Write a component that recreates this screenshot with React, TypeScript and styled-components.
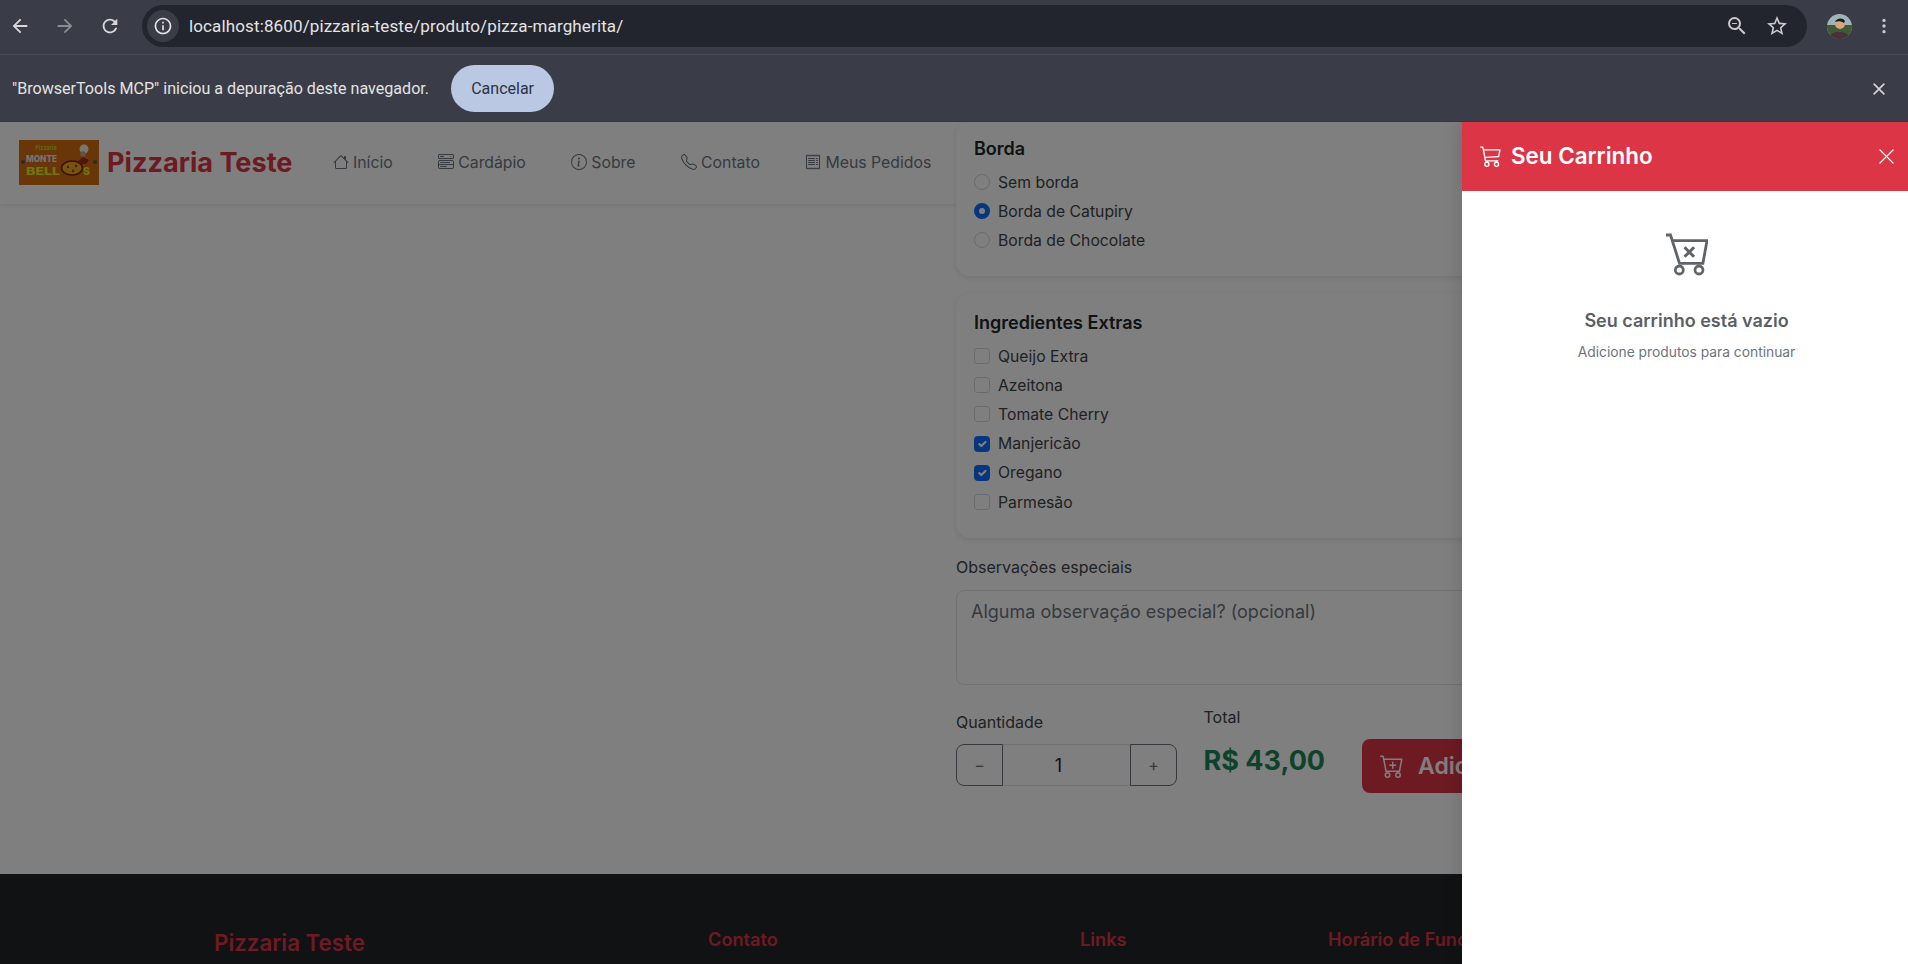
import React from "react";
import styled, { createGlobalStyle } from "styled-components";
import {
  BsCart3,
  BsCartPlus,
  BsHouse,
  BsInfoCircle,
  BsMenuButtonWide,
  BsReceipt,
  BsTelephone,
  BsThreeDotsVertical,
  BsX,
  BsXLg
} from "react-icons/bs";
import {
  MdArrowBack,
  MdArrowForward,
  MdOutlineInfo,
  MdRefresh,
  MdStarBorder,
  MdZoomOut
} from "react-icons/md";

const GlobalStyle = createGlobalStyle`
  html, body {
    margin: 0;
    height: 100%;
    overflow: hidden;
    background: #fff;
  }
  #root {
    height: 100%;
  }
  * {
    box-sizing: border-box;
  }
`;

const Screen = styled.div`
  height: 964px;
  display: flex;
  flex-direction: column;
  font-family: Inter, "Liberation Sans", sans-serif;
`;

/* browser chrome */
const Toolbar = styled.div`
  height: 55px;
  flex: none;
  display: flex;
  align-items: center;
  padding: 0 0 2px 8px;
  background: #3a3d47;
  border-bottom: 1px solid #4a4b50;
  color: #dfe1e5;
`;

const NavIcon = styled.span<{ $dim?: boolean }>`
  width: 24px;
  height: 24px;
  margin-right: 21px;
  display: flex;
  align-items: center;
  justify-content: center;
  font-size: 22px;
  color: ${(p) => (p.$dim ? "#8a8c92" : "#d6d8db")};
`;

const Omnibox = styled.div`
  width: 1665px;
  height: 42px;
  margin-left: -1px;
  display: flex;
  align-items: center;
  padding: 0 18px 0 5px;
  border-radius: 21px;
  background: #23252e;
`;

const SiteInfo = styled.span`
  width: 32px;
  height: 32px;
  border-radius: 50%;
  background: #3a3d47;
  display: flex;
  align-items: center;
  justify-content: center;
  font-size: 20px;
  color: #e3e3e3;
`;

const Url = styled.span`
  flex: 1;
  margin-left: 10px;
  font-family: Roboto, sans-serif;
  font-size: 17px;
  letter-spacing: 0.13px;
  color: #e3e3e3;
`;

const OmniAction = styled.span`
  margin-left: 16px;
  display: flex;
  font-size: 24px;
  color: #c8cacd;
`;

const Avatar = styled.svg`
  width: 25px;
  height: 25px;
  margin-left: 20px;
  border-radius: 50%;
`;

const MenuDots = styled.span`
  margin-left: 23px;
  display: flex;
  font-size: 18px;
  color: #c8cacd;
`;

const InfoBar = styled.div`
  height: 67px;
  flex: none;
  display: flex;
  align-items: center;
  padding: 0 16px 0 12px;
  background: #3a3d47;
  box-shadow: inset 0 -1px 0 #34363f;
  font-family: Roboto, sans-serif;
  font-size: 16.1px;
  color: #e3e3e3;
`;

const CancelButton = styled.button`
  width: 103px;
  height: 47px;
  margin-left: 22px;
  border: 0;
  border-radius: 24px;
  background: #bac8e4;
  color: #2a3345;
  font-family: Roboto, sans-serif;
  font-size: 16px;
`;

const InfoClose = styled.span`
  margin-left: auto;
  display: flex;
  font-size: 26px;
  color: #d5d6d9;
`;

/* page under the backdrop */
const Viewport = styled.div`
  flex: 1;
  min-height: 0;
  position: relative;
  overflow: hidden;
  display: flex;
  flex-direction: column;
  background: #fff;
`;

const Navbar = styled.header`
  position: absolute;
  top: 0;
  left: 0;
  width: 100%;
  height: 82px;
  display: flex;
  align-items: center;
  padding: 0 0 2px 19px;
  background: #fff;
  box-shadow: 0 2px 4px rgba(0, 0, 0, 0.08);
`;

const Logo = styled.svg`
  width: 80px;
  height: 45px;
  flex: none;
`;

const Brand = styled.span`
  width: 226px;
  margin-left: 8px;
  font-size: 27.1px;
  font-weight: 700;
  color: #dc3545;
`;

const NavLink = styled.a`
  display: flex;
  align-items: center;
  gap: 4px;
  margin-right: 45.5px;
  font-size: 15.8px;
  color: #6c757d;
  svg {
    font-size: 16px;
  }
`;

const Main = styled.main`
  position: relative;
  height: 752px;
  flex: none;
  margin-left: 956px;
  width: 900px;
`;

const Card = styled.section<{ $height: number; $offset: number; $pad: number }>`
  height: ${(p) => p.$height}px;
  margin-top: ${(p) => p.$offset}px;
  padding: ${(p) => p.$pad}px 18px 0;
  border-radius: 14px;
  background: #fff;
  box-shadow: 0 2px 6px rgba(0, 0, 0, 0.1);
`;

const CardTitle = styled.h3`
  margin: 0;
  font-size: 18px;
  line-height: 22px;
  font-weight: 600;
  color: #212529;
`;

const OptionList = styled.div`
  display: flex;
  flex-direction: column;
  margin-top: 7.5px;
`;

const Option = styled.label`
  height: 29.2px;
  display: flex;
  align-items: center;
  gap: 8px;
  font-size: 15.75px;
  color: #3f4449;
`;

const Radio = styled.span<{ $on?: boolean }>`
  width: 16px;
  height: 16px;
  border-radius: 50%;
  background: #fff;
  border: ${(p) => (p.$on ? "5px solid #0d6efd" : "1px solid #ced4da")};
`;

const Check = styled.span<{ $on?: boolean }>`
  width: 16px;
  height: 16px;
  border-radius: 3.5px;
  display: flex;
  align-items: center;
  justify-content: center;
  background: ${(p) => (p.$on ? "#0d6efd" : "#fff")};
  border: 1px solid ${(p) => (p.$on ? "#0d6efd" : "#ced4da")};
`;

const FieldLabel = styled.label`
  display: block;
  font-size: 16px;
  line-height: 20px;
  color: #3f4449;
`;

const NotesLabel = styled(FieldLabel)`
  margin-top: 19px;
`;

const Notes = styled.textarea`
  display: block;
  width: 100%;
  height: 95px;
  margin-top: 13px;
  padding: 10px 14px;
  resize: none;
  border: 1px solid #dee2e6;
  border-radius: 8px;
  background: #fff;
  font-family: Inter, sans-serif;
  font-size: 18px;
  outline: none;
  &::placeholder {
    color: #6c757d;
    opacity: 1;
  }
`;

const OrderRow = styled.div`
  display: flex;
  align-items: flex-start;
  margin-top: 22px;
`;

const QuantityBlock = styled.div`
  width: 247.5px;
  padding-top: 5px;
`;

const Stepper = styled.div`
  width: 221px;
  height: 42px;
  margin-top: 12px;
  display: flex;
`;

const StepButton = styled.button<{ $side: "left" | "right" }>`
  width: 47px;
  padding: 0;
  border: 1px solid #6c757d;
  border-radius: ${(p) => (p.$side === "left" ? "8px 0 0 8px" : "0 8px 8px 0")};
  background: transparent;
  color: #6c757d;
  font-family: Inter, sans-serif;
  font-size: 16px;
`;

const StepValue = styled.span`
  flex: 1;
  display: flex;
  align-items: center;
  justify-content: center;
  padding-right: 16px;
  border-top: 1px solid #dee2e6;
  border-bottom: 1px solid #dee2e6;
  font-size: 18px;
  color: #212529;
`;

const TotalBlock = styled.div`
  width: 158.5px;
`;

const TotalValue = styled.div`
  margin-top: 16px;
  font-size: 27px;
  line-height: 36px;
  font-weight: 700;
  color: #198754;
`;

const AddButton = styled.button`
  width: 330px;
  height: 54px;
  margin-top: 32px;
  flex: none;
  display: flex;
  align-items: center;
  gap: 14px;
  padding: 0 18px;
  border: 0;
  border-radius: 8px;
  background: #dc3545;
  color: #fff;
  font-family: Inter, sans-serif;
  font-size: 23px;
  font-weight: 600;
  white-space: nowrap;
  svg {
    font-size: 24px;
  }
`;

const Footer = styled.footer`
  flex: 1;
  display: grid;
  grid-template-columns: 494px 372px 248px 1fr;
  padding: 55px 0 0 214px;
  background: #212529;
`;

const FooterBrand = styled.h4`
  margin: 0;
  font-size: 22.3px;
  font-weight: 600;
  line-height: 28px;
  color: #dc3545;
`;

const FooterTitle = styled.h5`
  margin: -4px 0 0;
  font-size: 18.2px;
  font-weight: 600;
  line-height: 28px;
  white-space: nowrap;
  color: #dc3545;
`;

/* backdrop and cart drawer */
const Backdrop = styled.div`
  position: absolute;
  inset: 0;
  background: rgba(0, 0, 0, 0.5);
`;

const Drawer = styled.aside`
  position: absolute;
  top: 0;
  right: 0;
  bottom: 0;
  width: 446px;
  background: #fff;
  box-shadow: -5px 0 15px rgba(0, 0, 0, 0.1);
  display: flex;
  flex-direction: column;
`;

const DrawerHead = styled.div`
  height: 69px;
  flex: none;
  display: flex;
  align-items: center;
  padding: 0 12.5px 1px 18px;
  background: #dc3545;
  color: #fff;
`;

const DrawerTitle = styled.h2`
  flex: 1;
  margin: 0 0 1px 9px;
  font-size: 22.4px;
  font-weight: 600;
`;

const Empty = styled.div`
  display: flex;
  flex-direction: column;
  align-items: center;
  padding: 42px 0 0 3px;
`;

const EmptyCart = styled.svg`
  width: 42px;
  height: 43px;
  fill: none;
  stroke: #606469;
  stroke-width: 2.8;
`;

const EmptyTitle = styled.h5`
  margin: 34px 0 0;
  font-size: 18px;
  font-weight: 600;
  color: #5a5f65;
`;

const EmptyHint = styled.p`
  margin: 13px 0 0;
  font-size: 13.8px;
  color: #6c757d;
`;

const edges = ["Sem borda", "Borda de Catupiry", "Borda de Chocolate"];

const extras = [
  { name: "Queijo Extra", on: false },
  { name: "Azeitona", on: false },
  { name: "Tomate Cherry", on: false },
  { name: "Manjericão", on: true },
  { name: "Oregano", on: true },
  { name: "Parmesão", on: false }
];

const links = [
  { label: "Início", icon: <BsHouse /> },
  { label: "Cardápio", icon: <BsMenuButtonWide /> },
  { label: "Sobre", icon: <BsInfoCircle /> },
  { label: "Contato", icon: <BsTelephone /> },
  { label: "Meus Pedidos", icon: <BsReceipt /> }
];

const App = () => {
  return (
    <Screen>
      <GlobalStyle />
      <Toolbar>
        <NavIcon><MdArrowBack /></NavIcon>
        <NavIcon $dim><MdArrowForward /></NavIcon>
        <NavIcon><MdRefresh /></NavIcon>
        <Omnibox>
          <SiteInfo><MdOutlineInfo /></SiteInfo>
          <Url>localhost:8600/pizzaria-teste/produto/pizza-margherita/</Url>
          <OmniAction><MdZoomOut /></OmniAction>
          <OmniAction><MdStarBorder /></OmniAction>
        </Omnibox>
        <Avatar viewBox="0 0 25 25">
          <rect width="25" height="25" fill="#9fb4b8" />
          <rect y="11" width="25" height="14" fill="#3f5a34" />
          <path d="M2 25c1-6 5-7 10-7s10 1 11 7z" fill="#4a2f3d" />
          <circle cx="13" cy="10" r="5" fill="#d8a67e" />
          <path d="M8 8c1-4 8-5 10-1l-1 2c-3-2-6-2-9-1z" fill="#1e1a1c" />
        </Avatar>
        <MenuDots><BsThreeDotsVertical /></MenuDots>
      </Toolbar>
      <InfoBar>
        <span>"BrowserTools MCP" iniciou a depuração deste navegador.</span>
        <CancelButton>Cancelar</CancelButton>
        <InfoClose><BsX /></InfoClose>
      </InfoBar>
      <Viewport>
        <Navbar>
          <Logo viewBox="0 0 80 45">
            <rect width="80" height="45" fill="#d06c0e" />
            <circle cx="4" cy="22" r="2" fill="#555" />
            <circle cx="76" cy="22" r="2" fill="#555" />
            <text x="27" y="10" textAnchor="middle" fontSize="5.5" fontWeight="700" fontFamily="Inter" fill="#c4d41f">Pizzaria</text>
            <text x="7" y="21.5" fontSize="9.5" fontWeight="800" fontFamily="Inter" fill="#e8e8e8" textLength="31" lengthAdjust="spacingAndGlyphs">MONTE</text>
            <text x="7" y="34.5" fontSize="10.5" fontWeight="800" fontFamily="Inter" fill="#e3e81e" textLength="34" lengthAdjust="spacingAndGlyphs">BELL</text>
            <text x="64" y="34.5" fontSize="10.5" fontWeight="800" fontFamily="Inter" fill="#e3e81e">S</text>
            <ellipse cx="53" cy="28" rx="10.5" ry="7" fill="#e8a91c" stroke="#7a1d0a" strokeWidth="1.5" />
            <circle cx="49" cy="27" r="1.2" fill="#b5281a" />
            <circle cx="54" cy="31" r="1.2" fill="#b5281a" />
            <circle cx="57" cy="26" r="1.2" fill="#b5281a" />
            <circle cx="65" cy="9" r="4.5" fill="#f0ece4" />
            <circle cx="64" cy="14" r="2.8" fill="#c9a08a" />
            <path d="M58 22l6-5 6 3-3 4h-6z" fill="#a3281c" />
          </Logo>
          <Brand>Pizzaria Teste</Brand>
          {links.map((link) => (
            <NavLink key={link.label}>
              {link.icon}
              {link.label}
            </NavLink>
          ))}
        </Navbar>
        <Main>
          <Card $height={155} $offset={-1} $pad={17}>
            <CardTitle>Borda</CardTitle>
            <OptionList>
              {edges.map((edge, i) => (
                <Option key={edge}>
                  <Radio $on={i === 1} />
                  {edge}
                </Option>
              ))}
            </OptionList>
          </Card>
          <Card $height={245} $offset={17} $pad={19}>
            <CardTitle>Ingredientes Extras</CardTitle>
            <OptionList>
              {extras.map((extra) => (
                <Option key={extra.name}>
                  <Check $on={extra.on}>
                    {extra.on && (
                      <svg width="14" height="14" viewBox="0 0 20 20" fill="none" stroke="#fff" strokeWidth="3" strokeLinecap="round" strokeLinejoin="round">
                        <path d="M6 10l3 3 6-6" />
                      </svg>
                    )}
                  </Check>
                  {extra.name}
                </Option>
              ))}
            </OptionList>
          </Card>
          <NotesLabel>Observações especiais</NotesLabel>
          <Notes placeholder="Alguma observação especial? (opcional)" />
          <OrderRow>
            <QuantityBlock>
              <FieldLabel>Quantidade</FieldLabel>
              <Stepper>
                <StepButton $side="left">−</StepButton>
                <StepValue>1</StepValue>
                <StepButton $side="right">+</StepButton>
              </Stepper>
            </QuantityBlock>
            <TotalBlock>
              <FieldLabel>Total</FieldLabel>
              <TotalValue>R$ 43,00</TotalValue>
            </TotalBlock>
            <AddButton>
              <BsCartPlus />
              Adicionar ao Carrinho
            </AddButton>
          </OrderRow>
        </Main>
        <Footer>
          <FooterBrand>Pizzaria Teste</FooterBrand>
          <FooterTitle>Contato</FooterTitle>
          <FooterTitle>Links</FooterTitle>
          <FooterTitle>Horário de Funcionamento</FooterTitle>
        </Footer>
        <Backdrop />
        <Drawer>
          <DrawerHead>
            <BsCart3 size={22} />
            <DrawerTitle>Seu Carrinho</DrawerTitle>
            <BsXLg size={19} />
          </DrawerHead>
          <Empty>
            <EmptyCart viewBox="0 0 42 43">
              <path d="M0 2h4.5l9 28.3h23.4L41 7.7H5.5" />
              <circle cx="13.3" cy="37" r="4" />
              <circle cx="33" cy="37" r="4" />
              <path d="M18.5 14.2l9.6 9.6M28.1 14.2l-9.6 9.6" strokeWidth="3" />
            </EmptyCart>
            <EmptyTitle>Seu carrinho está vazio</EmptyTitle>
            <EmptyHint>Adicione produtos para continuar</EmptyHint>
          </Empty>
        </Drawer>
      </Viewport>
    </Screen>
  );
};

export default App;
